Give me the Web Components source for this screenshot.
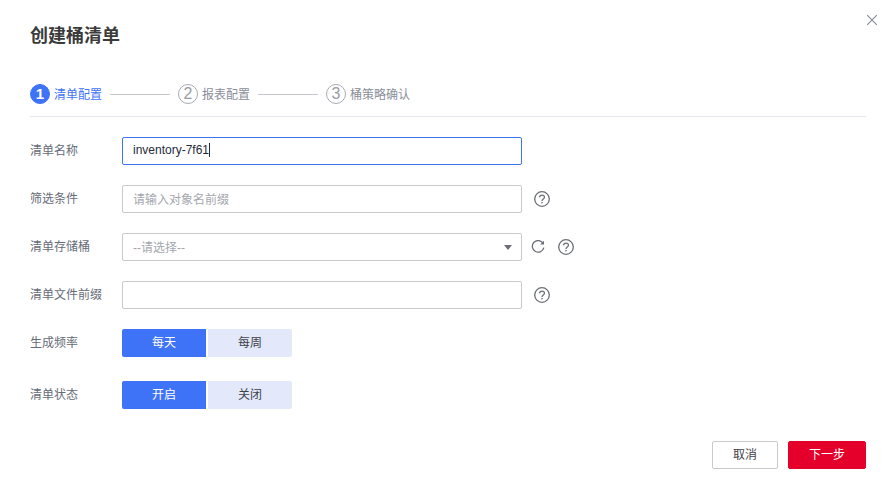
<!DOCTYPE html>
<html lang="zh-CN">
<head>
<meta charset="utf-8">
<title>创建桶清单</title>
<style>
  html, body { margin: 0; height: 100%; background: #fff; }
  body { font: 12px "Liberation Sans", "Noto Sans CJK SC", sans-serif; color: #252b3a; }
</style>
</head>
<body>
<bucket-dialog heading="创建桶清单">
  <step-bar slot="steps">
    <step-item num="1" active>清单配置</step-item>
    <step-item num="2">报表配置</step-item>
    <step-item num="3">桶策略确认</step-item>
  </step-bar>

  <form-row label="清单名称"><text-box focused value="inventory-7f61"></text-box></form-row>
  <form-row label="筛选条件"><text-box placeholder="请输入对象名前缀"></text-box><help-icon></help-icon></form-row>
  <form-row label="清单存储桶"><text-box select placeholder="--请选择--"></text-box><refresh-icon></refresh-icon><help-icon class="tight"></help-icon></form-row>
  <form-row label="清单文件前缀"><text-box></text-box><help-icon></help-icon></form-row>
  <form-row label="生成频率" class="toggle"><seg-toggle options="每天,每周"></seg-toggle></form-row>
  <form-row label="清单状态" class="toggle"><seg-toggle options="开启,关闭"></seg-toggle></form-row>

  <action-button slot="footer">取消</action-button>
  <action-button slot="footer" primary>下一步</action-button>
</bucket-dialog>

<script>
(function () {
  'use strict';

  function define(name, css, html, setup) {
    customElements.define(name, class extends HTMLElement {
      constructor() {
        super();
        this.attachShadow({ mode: 'open' }).innerHTML = '<style>' + css + '</style>' + html;
      }
      connectedCallback() {
        if (setup) setup.call(this, this.shadowRoot);
      }
    });
  }

  define('bucket-dialog', `
    :host { display: block; position: relative; box-sizing: border-box; width: 894px; height: 495px; padding: 0 28px 0 30px; overflow: hidden; }
    h1 { margin: 0; padding-top: 23px; height: 26px; font-size: 18px; line-height: 26px; font-weight: 700; color: #3b3b3b; }
    .steps { margin-top: 35px; padding-bottom: 12px; border-bottom: 1px solid #e4e7f0; }
    .rows { display: flex; flex-direction: column; margin-top: 20px; }
    .footer { display: flex; justify-content: flex-end; gap: 10px; margin-top: 8px; }
    .close { position: absolute; top: 15px; right: 17px; width: 10px; height: 10px; }
  `, `
    <h1 id="title"></h1>
    <svg class="close" viewBox="0 0 10 10" fill="none" stroke="#8a8e99" stroke-width="1.2"><path d="M0 0L10 10M10 0L0 10"/></svg>
    <div class="steps"><slot name="steps"></slot></div>
    <div class="rows"><slot></slot></div>
    <div class="footer"><slot name="footer"></slot></div>
  `, function (root) {
    root.getElementById('title').textContent = this.getAttribute('heading');
  });

  define('step-bar', `
    :host { display: flex; align-items: center; height: 20px; }
  `, '<slot></slot>');

  define('step-item', `
    :host { display: flex; align-items: center; color: #8a8e99; line-height: 20px; }
    :host([active]) { color: #3f73f7; }
    .num { box-sizing: border-box; width: 20px; height: 20px; margin-right: 4px; border: 1px solid #a8abb3; border-radius: 50%;
           text-align: center; line-height: 18px; font-size: 16px; color: #9a9da5; }
    :host([active]) .num { background: #3f73f7; border-color: #3f73f7; color: #fff; font-weight: 700; font-size: 15px; }
    .text { padding-top: 2px; }
    .line { width: 60px; height: 1px; margin: 0 8px; background: #c4c6cc; }
    :host(:last-child) .line { display: none; }
  `, '<span class="num" id="n"></span><span class="text"><slot></slot></span><span class="line"></span>', function (root) {
    root.getElementById('n').textContent = this.getAttribute('num');
  });

  define('form-row', `
    :host { display: flex; align-items: center; height: 28px; margin-bottom: 20px; }
    :host(.toggle) { margin-bottom: 24px; }
    label { flex: none; width: 92px; margin-bottom: 4px; color: #666b78; }
    .control { display: flex; align-items: center; }
  `, '<label id="l"></label><div class="control"><slot></slot></div>', function (root) {
    root.getElementById('l').textContent = this.getAttribute('label');
  });

  define('text-box', `
    :host { display: flex; align-items: center; box-sizing: border-box; position: relative; width: 400px; height: 28px; padding: 0 10px 2px;
            border: 1px solid #c8cacf; border-radius: 2px; background: #fff; color: #252b3a; }
    :host([focused]) { border-color: #3f73f7; }
    .ph { color: #a4a7ae; }
    .caret { display: none; width: 1px; height: 14px; background: #252b3a; }
    :host([focused]) .caret { display: block; }
    .arrow { display: none; position: absolute; right: 9px; top: 11px; width: 0; height: 0;
             border: 4px solid transparent; border-top: 5px solid #6c6f78; border-bottom: 0; }
    :host([select]) .arrow { display: block; }
  `, '<span id="v"></span><span class="caret"></span><span class="arrow"></span>', function (root) {
    const v = root.getElementById('v');
    const value = this.getAttribute('value');
    if (value) {
      v.textContent = value;
    } else {
      v.textContent = this.getAttribute('placeholder') || '';
      v.className = 'ph';
    }
  });

  define('help-icon', `
    :host { display: block; width: 16px; height: 16px; margin-left: 12px; }
    :host(.tight) { margin-left: 13px; }
    svg { display: block; }
  `, `<svg width="16" height="16" viewBox="0 0 16 16" fill="none">
        <circle cx="8" cy="8" r="7.3" stroke="#6c6f78" stroke-width="1.3"/>
        <path d="M5.6 6.3C5.7 4.9 6.7 4.1 8 4.1C9.4 4.1 10.4 5 10.4 6.2C10.4 7.2 9.8 7.7 9.1 8.2C8.4 8.7 8 9.1 8 10" stroke="#6c6f78" stroke-width="1.3"/>
        <rect x="7.3" y="11" width="1.4" height="1.4" fill="#6c6f78"/>
      </svg>`);

  define('refresh-icon', `
    :host { display: block; width: 14px; height: 14px; margin-left: 9px; }
    svg { display: block; }
  `, `<svg width="14" height="14" viewBox="0 0 14 14" fill="none">
        <path d="M12 3.2A5.8 5.8 0 1 0 12.8 7.6" stroke="#6c6f78" stroke-width="1.3"/>
        <path d="M13 .8V4.6H9.2Z" fill="#6c6f78"/>
      </svg>`);

  define('seg-toggle', `
    :host { display: flex; gap: 2px; }
    span { width: 84px; height: 28px; line-height: 28px; text-align: center; background: #e3e9fb; color: #3f424a; border-radius: 0 2px 2px 0; }
    span.on { background: #3f73f7; color: #fff; border-radius: 2px 0 0 2px; }
  `, '', function (root) {
    this.getAttribute('options').split(',').forEach(function (text, i) {
      const s = document.createElement('span');
      s.textContent = text;
      if (i === 0) s.className = 'on';
      root.appendChild(s);
    });
  });

  define('action-button', `
    :host { display: block; box-sizing: border-box; width: 66px; height: 28px; line-height: 26px; text-align: center;
            border: 1px solid #c8cacf; border-radius: 2px; background: #fff; color: #3f424a; }
    :host([primary]) { width: 78px; background: #e4002b; border-color: #e4002b; color: #fff; }
  `, '<slot></slot>');
})();
</script>
</body>
</html>
